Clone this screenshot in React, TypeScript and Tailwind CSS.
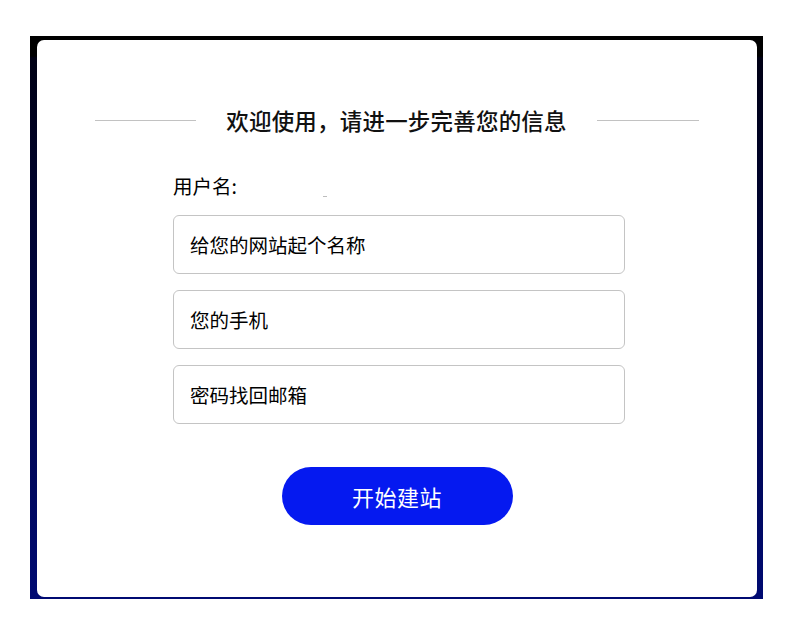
const fields = ["给您的网站起个名称", "您的手机", "密码找回邮箱"];

export default function App() {
  return (
    <div
      className="w-full h-[636px] bg-white pt-[36px] pl-[30px]"
      style={{ fontFamily: '"Noto Sans CJK SC", "Noto Sans", sans-serif' }}
    >
      <div className="w-[733px] h-[563px] pt-[4px] pl-[7px] bg-[linear-gradient(to_bottom,#000_0px,#000_20px,#000014_22px,#000a72_100%)]">
        <div className="w-[720px] h-[557px] bg-white rounded-[7px] pt-[65px]">
          {/* title */}
          <div className="flex items-center justify-center gap-[30px]">
            <div className="w-[101px] h-px bg-[#c2c2c2]" />
            <h1 className="text-[22.5px] leading-[30px] text-[#111] font-medium tracking-[0.2px]">
              欢迎使用，请进一步完善您的信息
            </h1>
            <div className="w-[102px] h-px bg-[#c2c2c2]" />
          </div>

          <div className="ml-[136px] w-[452px] mt-[38px]">
            <div className="flex items-end h-[26px]">
              <span className="text-[19.5px] leading-[26px] text-[#000]">用户名:</span>
              <span className="ml-[86px] mb-[2px] w-[4px] h-px bg-[#bdbdbd]" />
            </div>

            <div className="mt-[16px] flex flex-col gap-[16px]">
              {fields.map(f => (
                <input
                  key={f}
                  placeholder={f}
                  className="h-[59px] w-full rounded-[6px] border-[1.5px] border-[#c4c4c4] px-[16px] text-[19.5px] text-[#000] placeholder:text-[#000] outline-none"
                />
              ))}
            </div>
          </div>

          <div className="mt-[43px] flex justify-center">
            <button className="w-[231px] h-[58px] rounded-full bg-[#0519f0] text-white text-[22px] tracking-[0.5px]">
              开始建站
            </button>
          </div>
        </div>
      </div>
    </div>
  );
}
